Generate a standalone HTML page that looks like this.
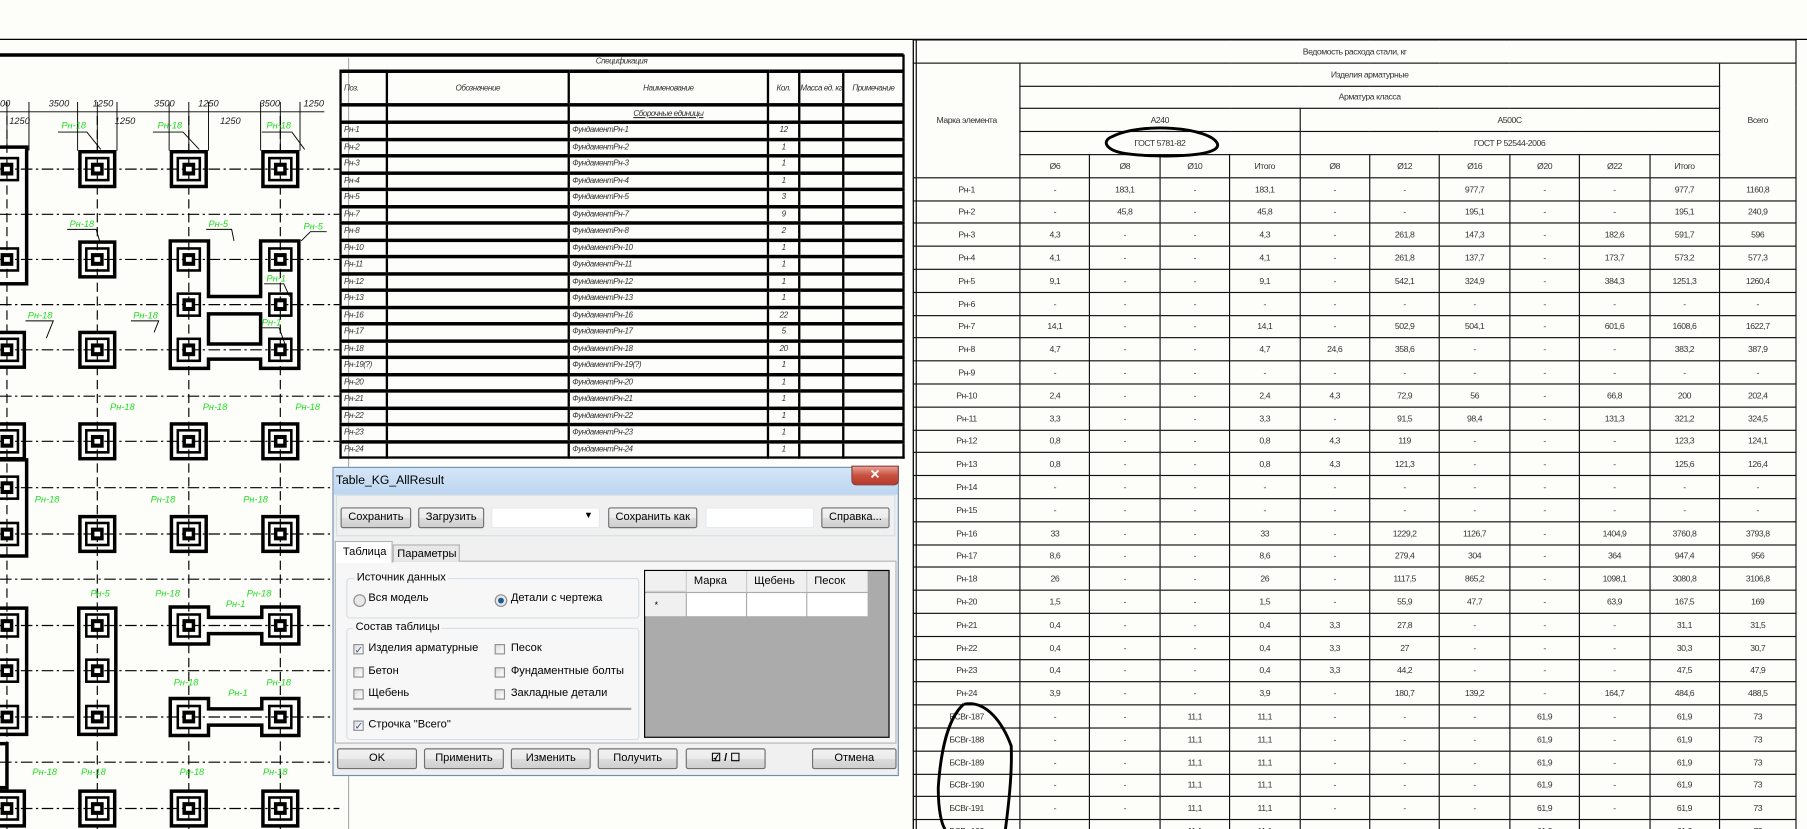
<!DOCTYPE html>
<html><head><meta charset="utf-8">
<style>
html,body{margin:0;padding:0;background:#fdfdf9;overflow:hidden;width:1807px;height:829px}
#c{position:absolute;left:0;top:0;width:1560px;height:716px;transform:scale(1.15833);transform-origin:0 0;overflow:hidden;background:#fdfdf9;font-family:"Liberation Sans",sans-serif}
.abs{position:absolute}
table{border-collapse:collapse;table-layout:fixed}
#rt{position:absolute;left:788px;top:34px;width:762px}
#rt td{border:1px solid #111;text-align:center;font-size:7.5px;color:#333;padding:0;height:18.8px;white-space:nowrap;overflow:hidden;letter-spacing:-0.4px;font-family:"Liberation Sans Narrow","Liberation Sans",sans-serif}
#st{position:absolute;left:293px;top:47px;width:486px}
#st td{border:2.5px solid #000;border-top-width:3px;font-size:7px;font-style:italic;color:#333;padding:0 0 0 2px;height:11.5px;white-space:nowrap;overflow:hidden;letter-spacing:-0.4px;font-family:"Liberation Sans Narrow","Liberation Sans",sans-serif}
#st td.c{text-align:center;padding:0}
.dlg{position:absolute;left:287px;top:403px;width:489px;height:267px;background:#f0f0f0;border:1px solid #6f8eb0;box-sizing:border-box;font-size:9.6px;color:#000}
.btn{position:absolute;height:18px;box-sizing:border-box;border:1px solid #707070;border-radius:2px;background:linear-gradient(#f2f2f2,#ebebeb 50%,#dddddd 51%,#cfcfcf);text-align:center;line-height:16px;font-size:9.6px}
.cb{position:absolute;width:9px;height:9px;border:1px solid #8e8f8f;background:linear-gradient(135deg,#dcdcdc,#fff);box-sizing:border-box}
.lbl{position:absolute;white-space:nowrap}
</style></head><body><div id="c">

<svg class="abs" style="left:0;top:0" width="1560" height="716" viewBox="0 0 1560 716">
<defs>
<g id="sq">
<rect x="-15" y="-15" width="30" height="30" fill="none" stroke="#000" stroke-width="3"/>
<rect x="-9.5" y="-9.5" width="19" height="19" fill="none" stroke="#000" stroke-width="2.2"/>
<rect x="-5.5" y="-5.5" width="11" height="11" fill="#000"/>
<rect x="-2.5" y="-2" width="5" height="4" fill="#fff"/>
</g>
<g id="in">
<rect x="-9.5" y="-9.5" width="19" height="19" fill="none" stroke="#000" stroke-width="2.2"/>
<rect x="-5.5" y="-5.5" width="11" height="11" fill="#000"/>
<rect x="-2.5" y="-2" width="5" height="4" fill="#fff"/>
</g>
</defs>
<line x1="0" y1="34" x2="1560" y2="34" stroke="#000" stroke-width="1"/>
<line x1="0" y1="47.5" x2="780" y2="47.5" stroke="#000" stroke-width="3"/>
<line x1="788.5" y1="34" x2="788.5" y2="716" stroke="#000" stroke-width="1"/>
<line x1="791" y1="34" x2="791" y2="716" stroke="#000" stroke-width="1"/>
<line x1="301" y1="50" x2="301" y2="716" stroke="#999" stroke-width="0.8"/>
<g stroke="#000" stroke-width="1" stroke-dasharray="10 3 2 3">
<line x1="0" y1="146" x2="293" y2="146"/><line x1="0" y1="185" x2="293" y2="185"/>
<line x1="0" y1="224" x2="293" y2="224"/><line x1="0" y1="263" x2="293" y2="263"/>
<line x1="0" y1="302" x2="293" y2="302"/><line x1="0" y1="342" x2="293" y2="342"/>
<line x1="0" y1="381" x2="293" y2="381"/><line x1="0" y1="421" x2="293" y2="421"/>
<line x1="0" y1="461" x2="293" y2="461"/><line x1="0" y1="500" x2="293" y2="500"/>
<line x1="0" y1="540" x2="293" y2="540"/><line x1="0" y1="579" x2="293" y2="579"/>
<line x1="0" y1="619" x2="293" y2="619"/><line x1="0" y1="658" x2="293" y2="658"/>
<line x1="0" y1="698" x2="293" y2="698"/>
</g>
<g stroke="#000" stroke-width="1" stroke-dasharray="8 4">
<line x1="6" y1="100" x2="6" y2="716"/><line x1="84" y1="100" x2="84" y2="716"/>
<line x1="163" y1="100" x2="163" y2="716"/><line x1="242" y1="100" x2="242" y2="716"/>
</g>
<g stroke="#000" stroke-width="0.8">
<line x1="0" y1="96.5" x2="280" y2="96.5"/>
<line x1="6" y1="88" x2="6" y2="130"/><line x1="25" y1="88" x2="25" y2="130"/>
<line x1="67" y1="88" x2="67" y2="130"/><line x1="84" y1="88" x2="84" y2="130"/><line x1="101" y1="88" x2="101" y2="130"/>
<line x1="146" y1="88" x2="146" y2="130"/><line x1="163" y1="88" x2="163" y2="130"/><line x1="180" y1="88" x2="180" y2="130"/>
<line x1="225" y1="88" x2="225" y2="130"/><line x1="242" y1="88" x2="242" y2="130"/><line x1="259" y1="88" x2="259" y2="130"/>
</g>
<g font-size="8" font-style="italic" fill="#222" font-family="Liberation Sans Narrow,Liberation Sans,sans-serif">
<text x="0" y="92">00</text><text x="42" y="92">3500</text><text x="80" y="92">1250</text>
<text x="133" y="92">3500</text><text x="171" y="92">1250</text><text x="224" y="92">3500</text><text x="262" y="92">1250</text>
<text x="8" y="107">1250</text><text x="99" y="107">1250</text><text x="190" y="107">1250</text>
</g>
<use href="#sq" x="84" y="146"/><use href="#sq" x="163" y="146"/><use href="#sq" x="242" y="146"/>
<use href="#sq" x="84" y="224"/><use href="#sq" x="84" y="302"/>
<use href="#sq" x="84" y="381"/><use href="#sq" x="163" y="381"/><use href="#sq" x="242" y="381"/>
<use href="#sq" x="84" y="461"/><use href="#sq" x="163" y="461"/><use href="#sq" x="242" y="461"/>
<use href="#sq" x="84" y="698"/><use href="#sq" x="163" y="698"/><use href="#sq" x="242" y="698"/>
<use href="#sq" x="6" y="698"/><use href="#sq" x="6" y="302"/><use href="#sq" x="6" y="381"/>
<rect x="-10" y="127" width="33" height="118" fill="none" stroke="#000" stroke-width="3"/>
<use href="#in" x="6" y="146"/><use href="#in" x="6" y="224"/>
<rect x="-10" y="397" width="33" height="83" fill="none" stroke="#000" stroke-width="3"/>
<use href="#in" x="6" y="421"/><use href="#in" x="6" y="461"/>
<rect x="-10" y="525" width="33" height="109" fill="none" stroke="#000" stroke-width="3"/>
<use href="#in" x="6" y="540"/><use href="#in" x="6" y="579"/><use href="#in" x="6" y="619"/>
<rect x="-10" y="642" width="16" height="38" fill="none" stroke="#000" stroke-width="3"/>
<path d="M147,208 H180 V256 H225 V208 H258 V318 H225 V310 H180 V318 H147 Z" fill="none" stroke="#000" stroke-width="3"/>
<path d="M180,271 H225 V297 H180 Z" fill="none" stroke="#000" stroke-width="3"/>
<use href="#in" x="163" y="224"/><use href="#in" x="163" y="263"/><use href="#in" x="163" y="302"/>
<use href="#in" x="242" y="224"/><use href="#in" x="242" y="263"/><use href="#in" x="242" y="302"/>
<rect x="68" y="525" width="32" height="109" fill="none" stroke="#000" stroke-width="3"/>
<use href="#in" x="84" y="540"/><use href="#in" x="84" y="579"/><use href="#in" x="84" y="619"/>
<path d="M147,524 H180 V533 H226 V524 H258 V556 H226 V547 H180 V556 H147 Z" fill="none" stroke="#000" stroke-width="3"/>
<use href="#in" x="163" y="540"/><use href="#in" x="242" y="540"/>
<path d="M147,603 H180 V612 H226 V603 H258 V635 H226 V626 H180 V635 H147 Z" fill="none" stroke="#000" stroke-width="3"/>
<use href="#in" x="163" y="619"/><use href="#in" x="242" y="619"/>
<g font-size="8" font-style="italic" fill="#22dd22" font-family="Liberation Sans Narrow,Liberation Sans,sans-serif">
<text x="53" y="111">Рн-18</text><text x="136" y="111">Рн-18</text><text x="230" y="111">Рн-18</text>
<text x="60" y="196">Рн-18</text><text x="180" y="196">Рн-5</text><text x="262" y="198">Рн-5</text>
<text x="230" y="243">Рн-1</text><text x="226" y="281">Рн-1</text>
<text x="24" y="275">Рн-18</text><text x="115" y="275">Рн-18</text>
<text x="95" y="354">Рн-18</text><text x="175" y="354">Рн-18</text><text x="255" y="354">Рн-18</text>
<text x="30" y="434">Рн-18</text><text x="130" y="434">Рн-18</text><text x="210" y="434">Рн-18</text>
<text x="78" y="515">Рн-5</text><text x="134" y="515">Рн-18</text><text x="213" y="515">Рн-18</text><text x="195" y="524">Рн-1</text>
<text x="150" y="592">Рн-18</text><text x="230" y="592">Рн-18</text><text x="197" y="601">Рн-1</text>
<text x="28" y="669">Рн-18</text><text x="70" y="669">Рн-18</text><text x="155" y="669">Рн-18</text><text x="227" y="669">Рн-18</text>
</g>
<g stroke="#000" stroke-width="0.8" fill="none">
<path d="M50,114 H75 L87,129"/><path d="M132,114 H158 L172,129"/><path d="M226,114 H252 L263,129"/>
<path d="M58,198 H83 L86,208"/><path d="M178,198 H200 L202,208"/><path d="M282,200 H268 L260,208"/>
<path d="M228,245 H245 L250,256"/><path d="M224,283 H241 L246,297"/>
<path d="M22,277 H46 L40,292"/><path d="M113,277 H137 L133,287"/>
</g>
</svg>

<table id="st">
<colgroup><col style="width:40px"><col style="width:157px"><col style="width:172px"><col style="width:27px"><col style="width:38px"><col style="width:52px"></colgroup>
<tr><td class="c" colspan="6" style="height:13px;border-left:none;border-top:none">Спецификация</td></tr>
<tr><td style="height:26px">Поз.</td><td class="c">Обозначение</td><td class="c">Наименование</td><td class="c">Кол.</td><td class="c">Масса ед. кг</td><td class="c">Примечание</td></tr>
<tr><td style="height:12px"></td><td></td><td class="c"><u>Сборочные единицы</u></td><td></td><td></td><td></td></tr>
<tr><td>Рн-1</td><td></td><td>ФундаментРн-1</td><td class="c">12</td><td></td><td></td></tr>
<tr><td>Рн-2</td><td></td><td>ФундаментРн-2</td><td class="c">1</td><td></td><td></td></tr>
<tr><td>Рн-3</td><td></td><td>ФундаментРн-3</td><td class="c">1</td><td></td><td></td></tr>
<tr><td>Рн-4</td><td></td><td>ФундаментРн-4</td><td class="c">1</td><td></td><td></td></tr>
<tr><td>Рн-5</td><td></td><td>ФундаментРн-5</td><td class="c">3</td><td></td><td></td></tr>
<tr><td>Рн-7</td><td></td><td>ФундаментРн-7</td><td class="c">9</td><td></td><td></td></tr>
<tr><td>Рн-8</td><td></td><td>ФундаментРн-8</td><td class="c">2</td><td></td><td></td></tr>
<tr><td>Рн-10</td><td></td><td>ФундаментРн-10</td><td class="c">1</td><td></td><td></td></tr>
<tr><td>Рн-11</td><td></td><td>ФундаментРн-11</td><td class="c">1</td><td></td><td></td></tr>
<tr><td>Рн-12</td><td></td><td>ФундаментРн-12</td><td class="c">1</td><td></td><td></td></tr>
<tr><td>Рн-13</td><td></td><td>ФундаментРн-13</td><td class="c">1</td><td></td><td></td></tr>
<tr><td>Рн-16</td><td></td><td>ФундаментРн-16</td><td class="c">22</td><td></td><td></td></tr>
<tr><td>Рн-17</td><td></td><td>ФундаментРн-17</td><td class="c">5</td><td></td><td></td></tr>
<tr><td>Рн-18</td><td></td><td>ФундаментРн-18</td><td class="c">20</td><td></td><td></td></tr>
<tr><td>Рн-19(?)</td><td></td><td>ФундаментРн-19(?)</td><td class="c">1</td><td></td><td></td></tr>
<tr><td>Рн-20</td><td></td><td>ФундаментРн-20</td><td class="c">1</td><td></td><td></td></tr>
<tr><td>Рн-21</td><td></td><td>ФундаментРн-21</td><td class="c">1</td><td></td><td></td></tr>
<tr><td>Рн-22</td><td></td><td>ФундаментРн-22</td><td class="c">1</td><td></td><td></td></tr>
<tr><td>Рн-23</td><td></td><td>ФундаментРн-23</td><td class="c">1</td><td></td><td></td></tr>
<tr><td>Рн-24</td><td></td><td>ФундаментРн-24</td><td class="c">1</td><td></td><td></td></tr>
</table>

<table id="rt">
<colgroup><col style="width:92px"><col style="width:60.4px"><col style="width:60.4px"><col style="width:60.4px"><col style="width:60.4px"><col style="width:60.4px"><col style="width:60.4px"><col style="width:60.4px"><col style="width:60.4px"><col style="width:60.4px"><col style="width:60.4px"><col style="width:66px"></colgroup>
<tr><td colspan="12">Ведомость расхода стали, кг</td></tr>
<tr><td rowspan="5">Марка элемента</td><td colspan="10">Изделия арматурные</td><td rowspan="5">Всего</td></tr>
<tr><td colspan="10">Арматура класса</td></tr>
<tr><td colspan="4">А240</td><td colspan="6">А500С</td></tr>
<tr><td colspan="4">ГОСТ 5781-82</td><td colspan="6">ГОСТ Р 52544-2006</td></tr>
<tr><td>Ø6</td><td>Ø8</td><td>Ø10</td><td>Итого</td><td>Ø8</td><td>Ø12</td><td>Ø16</td><td>Ø20</td><td>Ø22</td><td>Итого</td></tr>
<tr><td>Рн-1</td><td>-</td><td>183,1</td><td>-</td><td>183,1</td><td>-</td><td>-</td><td>977,7</td><td>-</td><td>-</td><td>977,7</td><td>1160,8</td></tr>
<tr><td>Рн-2</td><td>-</td><td>45,8</td><td>-</td><td>45,8</td><td>-</td><td>-</td><td>195,1</td><td>-</td><td>-</td><td>195,1</td><td>240,9</td></tr>
<tr><td>Рн-3</td><td>4,3</td><td>-</td><td>-</td><td>4,3</td><td>-</td><td>261,8</td><td>147,3</td><td>-</td><td>182,6</td><td>591,7</td><td>596</td></tr>
<tr><td>Рн-4</td><td>4,1</td><td>-</td><td>-</td><td>4,1</td><td>-</td><td>261,8</td><td>137,7</td><td>-</td><td>173,7</td><td>573,2</td><td>577,3</td></tr>
<tr><td>Рн-5</td><td>9,1</td><td>-</td><td>-</td><td>9,1</td><td>-</td><td>542,1</td><td>324,9</td><td>-</td><td>384,3</td><td>1251,3</td><td>1260,4</td></tr>
<tr><td>Рн-6</td><td>-</td><td>-</td><td>-</td><td>-</td><td>-</td><td>-</td><td>-</td><td>-</td><td>-</td><td>-</td><td>-</td></tr>
<tr><td>Рн-7</td><td>14,1</td><td>-</td><td>-</td><td>14,1</td><td>-</td><td>502,9</td><td>504,1</td><td>-</td><td>601,6</td><td>1608,6</td><td>1622,7</td></tr>
<tr><td>Рн-8</td><td>4,7</td><td>-</td><td>-</td><td>4,7</td><td>24,6</td><td>358,6</td><td>-</td><td>-</td><td>-</td><td>383,2</td><td>387,9</td></tr>
<tr><td>Рн-9</td><td>-</td><td>-</td><td>-</td><td>-</td><td>-</td><td>-</td><td>-</td><td>-</td><td>-</td><td>-</td><td>-</td></tr>
<tr><td>Рн-10</td><td>2,4</td><td>-</td><td>-</td><td>2,4</td><td>4,3</td><td>72,9</td><td>56</td><td>-</td><td>66,8</td><td>200</td><td>202,4</td></tr>
<tr><td>Рн-11</td><td>3,3</td><td>-</td><td>-</td><td>3,3</td><td>-</td><td>91,5</td><td>98,4</td><td>-</td><td>131,3</td><td>321,2</td><td>324,5</td></tr>
<tr><td>Рн-12</td><td>0,8</td><td>-</td><td>-</td><td>0,8</td><td>4,3</td><td>119</td><td>-</td><td>-</td><td>-</td><td>123,3</td><td>124,1</td></tr>
<tr><td>Рн-13</td><td>0,8</td><td>-</td><td>-</td><td>0,8</td><td>4,3</td><td>121,3</td><td>-</td><td>-</td><td>-</td><td>125,6</td><td>126,4</td></tr>
<tr><td>Рн-14</td><td>-</td><td>-</td><td>-</td><td>-</td><td>-</td><td>-</td><td>-</td><td>-</td><td>-</td><td>-</td><td>-</td></tr>
<tr><td>Рн-15</td><td>-</td><td>-</td><td>-</td><td>-</td><td>-</td><td>-</td><td>-</td><td>-</td><td>-</td><td>-</td><td>-</td></tr>
<tr><td>Рн-16</td><td>33</td><td>-</td><td>-</td><td>33</td><td>-</td><td>1229,2</td><td>1126,7</td><td>-</td><td>1404,9</td><td>3760,8</td><td>3793,8</td></tr>
<tr><td>Рн-17</td><td>8,6</td><td>-</td><td>-</td><td>8,6</td><td>-</td><td>279,4</td><td>304</td><td>-</td><td>364</td><td>947,4</td><td>956</td></tr>
<tr><td>Рн-18</td><td>26</td><td>-</td><td>-</td><td>26</td><td>-</td><td>1117,5</td><td>865,2</td><td>-</td><td>1098,1</td><td>3080,8</td><td>3106,8</td></tr>
<tr><td>Рн-20</td><td>1,5</td><td>-</td><td>-</td><td>1,5</td><td>-</td><td>55,9</td><td>47,7</td><td>-</td><td>63,9</td><td>167,5</td><td>169</td></tr>
<tr><td>Рн-21</td><td>0,4</td><td>-</td><td>-</td><td>0,4</td><td>3,3</td><td>27,8</td><td>-</td><td>-</td><td>-</td><td>31,1</td><td>31,5</td></tr>
<tr><td>Рн-22</td><td>0,4</td><td>-</td><td>-</td><td>0,4</td><td>3,3</td><td>27</td><td>-</td><td>-</td><td>-</td><td>30,3</td><td>30,7</td></tr>
<tr><td>Рн-23</td><td>0,4</td><td>-</td><td>-</td><td>0,4</td><td>3,3</td><td>44,2</td><td>-</td><td>-</td><td>-</td><td>47,5</td><td>47,9</td></tr>
<tr><td>Рн-24</td><td>3,9</td><td>-</td><td>-</td><td>3,9</td><td>-</td><td>180,7</td><td>139,2</td><td>-</td><td>164,7</td><td>484,6</td><td>488,5</td></tr>
<tr><td>БСВг-187</td><td>-</td><td>-</td><td>11,1</td><td>11,1</td><td>-</td><td>-</td><td>-</td><td>61,9</td><td>-</td><td>61,9</td><td>73</td></tr>
<tr><td>БСВг-188</td><td>-</td><td>-</td><td>11,1</td><td>11,1</td><td>-</td><td>-</td><td>-</td><td>61,9</td><td>-</td><td>61,9</td><td>73</td></tr>
<tr><td>БСВг-189</td><td>-</td><td>-</td><td>11,1</td><td>11,1</td><td>-</td><td>-</td><td>-</td><td>61,9</td><td>-</td><td>61,9</td><td>73</td></tr>
<tr><td>БСВг-190</td><td>-</td><td>-</td><td>11,1</td><td>11,1</td><td>-</td><td>-</td><td>-</td><td>61,9</td><td>-</td><td>61,9</td><td>73</td></tr>
<tr><td>БСВг-191</td><td>-</td><td>-</td><td>11,1</td><td>11,1</td><td>-</td><td>-</td><td>-</td><td>61,9</td><td>-</td><td>61,9</td><td>73</td></tr>
<tr><td>БСВг-192</td><td>-</td><td>-</td><td>11,1</td><td>11,1</td><td>-</td><td>-</td><td>-</td><td>61,9</td><td>-</td><td>61,9</td><td>73</td></tr>
</table>

<svg class="abs" style="left:0;top:0;pointer-events:none" width="1560" height="716">
<path d="M960,118 C985,105 1045,110 1051,124 C1055,136 1000,136 975,133 C955,131 950,122 960,118 Z" fill="none" stroke="#000" stroke-width="2.5"/>
<path d="M832,608 C852,604 866,625 873,644 C874,670 870,700 868,716 M832,608 C818,620 812,650 810,680 C810,700 813,712 816,716" fill="none" stroke="#000" stroke-width="2.5"/>
</svg>

<div class="dlg">
 <div class="abs" style="left:0;top:0;width:487px;height:23px;background:linear-gradient(#d4e6f8,#bcd5ef)"></div>
 <div class="lbl" style="left:2px;top:5px;font-size:10.5px">Table_KG_AllResult</div>
 <div class="abs" style="left:447px;top:-2px;width:41px;height:17px;border:1px solid #8a3a3a;border-radius:0 0 4px 4px;background:linear-gradient(#e8a090,#c75040 50%,#b83a2a);box-sizing:border-box;color:#fff;text-align:center;font-weight:bold;font-size:11px;line-height:15px">✕</div>
 <div class="abs" style="left:2px;top:23px;width:483px;height:36px;border:1px solid #d5dfe5;background:#f0f0f0;box-sizing:border-box"></div>
 <div class="btn" style="left:6px;top:34px;width:61px">Сохранить</div>
 <div class="btn" style="left:73px;top:34px;width:57px">Загрузить</div>
 <div class="abs" style="left:136px;top:34px;width:94px;height:18px;background:#fff;border:1px solid #e3e9ef;box-sizing:border-box"><span style="position:absolute;right:5px;top:1px;font-size:8px">▼</span></div>
 <div class="btn" style="left:237px;top:34px;width:77px">Сохранить как</div>
 <div class="abs" style="left:321px;top:34px;width:94px;height:18px;background:#fff;border:1px solid #e3e9ef;box-sizing:border-box"></div>
 <div class="btn" style="left:421px;top:34px;width:59px">Справка...</div>
 <div class="abs" style="left:1px;top:80px;width:485px;height:158px;border:1px solid #b4b4b4;box-sizing:border-box;background:#f7f7f7"></div>
 <div class="abs" style="left:1px;top:63px;width:50px;height:19px;border:1px solid #b4b4b4;border-bottom:none;background:#fff;box-sizing:border-box;padding:3px 0 0 6px">Таблица</div>
 <div class="abs" style="left:51px;top:66px;width:58px;height:15px;border:1px solid #b4b4b4;border-bottom:none;background:#e8e8e8;box-sizing:border-box;padding:2px 0 0 3px">Параметры</div>
 <div class="abs" style="left:11px;top:95px;width:251px;height:33px;border:1px solid #d5dfe5;border-radius:3px"></div>
 <div class="lbl" style="left:18px;top:89px;background:#f7f7f7;padding:0 2px">Источник данных</div>
 <div class="abs" style="left:17px;top:109px;width:9px;height:9px;border:1px solid #8e8f8f;border-radius:50%;background:#e8e8e8"></div>
 <div class="lbl" style="left:30px;top:107px">Вся модель</div>
 <div class="abs" style="left:139px;top:109px;width:9px;height:9px;border:1px solid #8e8f8f;border-radius:50%;background:#e8e8e8"><div style="margin:2px;width:5px;height:5px;border-radius:50%;background:#1c5a8c"></div></div>
 <div class="lbl" style="left:153px;top:107px">Детали с чертежа</div>
 <div class="abs" style="left:11px;top:138px;width:251px;height:95px;border:1px solid #d5dfe5;border-radius:3px"></div>
 <div class="lbl" style="left:17px;top:132px;background:#f7f7f7;padding:0 2px">Состав таблицы</div>
 <div class="cb" style="left:17px;top:152px;color:#3a5a9a;font-size:9px;line-height:8px;text-align:center">✓</div><div class="lbl" style="left:30px;top:150px">Изделия арматурные</div>
 <div class="cb" style="left:139px;top:152px"></div><div class="lbl" style="left:153px;top:150px">Песок</div>
 <div class="cb" style="left:17px;top:172px"></div><div class="lbl" style="left:30px;top:170px">Бетон</div>
 <div class="cb" style="left:139px;top:172px"></div><div class="lbl" style="left:153px;top:170px">Фундаментные болты</div>
 <div class="cb" style="left:17px;top:191px"></div><div class="lbl" style="left:30px;top:189px">Щебень</div>
 <div class="cb" style="left:139px;top:191px"></div><div class="lbl" style="left:153px;top:189px">Закладные детали</div>
 <div class="abs" style="left:17px;top:207px;width:240px;height:2px;background:#a0a0a0"></div>
 <div class="cb" style="left:17px;top:218px;color:#3a5a9a;font-size:9px;line-height:8px;text-align:center">✓</div><div class="lbl" style="left:30px;top:216px">Строчка "Всего"</div>
 <div class="abs" style="left:268px;top:88px;width:212px;height:145px;background:#ababab;border:1px solid #000;box-sizing:border-box">
  <div class="abs" style="left:0;top:0;width:36px;height:18px;background:#f0f0f0;border-right:1px solid #ccc;border-bottom:1px solid #ccc;box-sizing:border-box"></div>
  <div class="abs" style="left:36px;top:0;width:52px;height:18px;background:#f0f0f0;border-right:1px solid #ccc;box-sizing:border-box;padding:3px 0 0 6px">Марка</div>
  <div class="abs" style="left:88px;top:0;width:52px;height:18px;background:#f0f0f0;border-right:1px solid #ccc;box-sizing:border-box;padding:3px 0 0 6px">Щебень</div>
  <div class="abs" style="left:140px;top:0;width:52px;height:18px;background:#f0f0f0;box-sizing:border-box;padding:3px 0 0 6px">Песок</div>
  <div class="abs" style="left:0;top:19px;width:35px;height:20px;background:#f0f0f0;font-size:8px;padding:6px 0 0 8px;box-sizing:border-box">*</div>
  <div class="abs" style="left:36px;top:19px;width:51px;height:20px;background:#fff"></div>
  <div class="abs" style="left:88px;top:19px;width:51px;height:20px;background:#fff"></div>
  <div class="abs" style="left:140px;top:19px;width:52px;height:20px;background:#fff"></div>
 </div>
 <div class="btn" style="left:3px;top:242px;width:69px">OK</div>
 <div class="btn" style="left:78px;top:242px;width:69px">Применить</div>
 <div class="btn" style="left:153px;top:242px;width:69px">Изменить</div>
 <div class="btn" style="left:228px;top:242px;width:69px">Получить</div>
 <div class="btn" style="left:304px;top:242px;width:69px;font-weight:bold">☑ / ☐</div>
 <div class="btn" style="left:413px;top:242px;width:73px">Отмена</div>
</div>

</div></body></html>
